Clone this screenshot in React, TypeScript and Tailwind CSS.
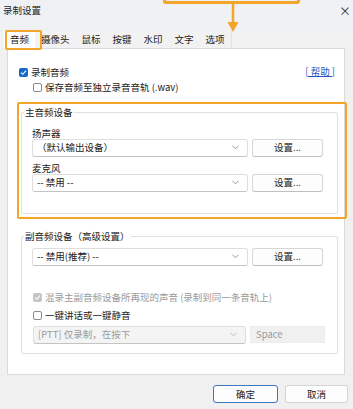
import React from "react";

const Chevron = ({ color = "#888" }: { color?: string }) => (
  <svg width="7" height="5" viewBox="0 0 7 5" className="shrink-0">
    <polyline points="0.5,0.8 3.5,3.8 6.5,0.8" fill="none" stroke={color} strokeWidth="0.9" />
  </svg>
);

const CheckBox = ({ checked, disabled }: { checked?: boolean; disabled?: boolean }) => {
  if (checked) {
    return (
      <span
        className={`w-[9px] h-[9px] rounded-[2px] flex items-center justify-center shrink-0 ${
          disabled ? "bg-[#c4c4c4]" : "bg-[#1668c9]"
        }`}
      >
        <svg width="7" height="7" viewBox="0 0 7 7">
          <polyline points="1,3.6 2.8,5.3 6,1.6" fill="none" stroke="#fff" strokeWidth="1.1" />
        </svg>
      </span>
    );
  }
  return <span className="w-[9px] h-[9px] rounded-[2px] border border-[#8a8a8a] bg-white shrink-0" />;
};

const Select = ({ text, disabled }: { text: string; disabled?: boolean }) => (
  <div
    className={`flex-1 h-[18px] flex items-center justify-between pl-[4px] pr-[8px] rounded-[3px] border border-[#dedede] border-b-[#c4c4c4] ${
      disabled ? "bg-[#f4f4f4] text-[#9a9a9a]" : "bg-white text-[#222]"
    }`}
  >
    <span>{text}</span>
    <Chevron color={disabled ? "#b8b8b8" : "#8a8a8a"} />
  </div>
);

const SetBtn = () => (
  <div className="w-[71px] h-[18px] flex items-center justify-center rounded-[3px] border border-[#d6d6d6] border-b-[#c0c0c0] bg-[#fdfdfd] text-[#222]">
    设置...
  </div>
);

export default function App() {
  return (
    <div className="relative w-[353px] h-[409px] overflow-hidden bg-[#f0f0f0] text-[9.5px] leading-[13px] text-[#222] font-['Noto_Sans_CJK_SC',sans-serif]">
      {/* title bar */}
      <div className="h-[31px] flex items-start justify-between pl-[3px] pr-[2px] bg-[#eff1f4]">
        <span className="mt-[4px]">录制设置</span>
        <span className="mt-[4px] text-[12px] text-[#333]">×</span>
      </div>

      {/* tabs */}
      <div className="flex h-[17px] pl-[4px] bg-[#f2f2f2]">
        {["音频", "摄像头", "鼠标", "按键", "水印", "文字", "选项"].map((t, i) => (
          <div
            key={t}
            className={`px-[6px] flex items-center ${i === 0 ? "bg-white" : ""} ${
              i === 6 ? "border-r border-[#e2e2e2]" : ""
            }`}
          >
            {t}
          </div>
        ))}
      </div>

      {/* panel */}
      <div className="ml-[7px] w-[338px] h-[327px] bg-white border border-[#dadada] pt-[16.5px] pl-[11px] pr-[5px]">
        <div className="flex items-center justify-between h-[13px]">
          <div className="flex items-center gap-[3px]">
            <CheckBox checked />
            <span>录制音频</span>
          </div>
          <span className="text-[#2357c4] underline mr-[4px] -mt-[2px]">[ 帮助 ]</span>
        </div>
        <div className="flex items-center gap-[3px] h-[13px] mt-[2px] ml-[14px]">
          <CheckBox />
          <span>保存音频至独立录音音轨 (.wav)</span>
        </div>

        {/* group 1 */}
        <div className="relative mt-[18.5px] ml-[2px] w-[317px] border border-[#e0e0e0] rounded-[2px] pt-[13.5px] pl-[10px] pr-[14px] pb-[21px]">
          <span className="absolute -top-[7px] left-[2px] bg-white px-[1px]">主音频设备</span>
          <div className="leading-[12px] pl-[-1px]">扬声器</div>
          <div className="flex gap-[4px]">
            <Select text="（默认输出设备）" />
            <SetBtn />
          </div>
          <div className="leading-[12px] mt-[5px]">麦克风</div>
          <div className="flex gap-[4px]">
            <Select text="-- 禁用 --" />
            <SetBtn />
          </div>
        </div>

        {/* group 2 */}
        <div className="relative mt-[22px] ml-[2px] w-[317px] border border-[#e0e0e0] rounded-[2px] pt-[11px] pl-[10px] pr-[12px] pb-[9px]">
          <span className="absolute -top-[7px] left-[2px] bg-white px-[1px]">副音频设备（高级设置）</span>
          <div className="flex gap-[4px] pr-[2px]">
            <Select text="-- 禁用(推荐) --" />
            <SetBtn />
          </div>
          <div className="flex items-center gap-[3px] h-[13px] mt-[25.5px] ml-[1px] text-[#9a9a9a]">
            <CheckBox checked disabled />
            <span>混录主副音频设备所再现的声音 (录制到同一条音轨上)</span>
          </div>
          <div className="flex items-center gap-[3px] h-[13px] mt-[5px] ml-[1px]">
            <CheckBox />
            <span>一键讲话或一键静音</span>
          </div>
          <div className="flex gap-[4px] mt-[3.5px] ml-[1px]">
            <Select text="[PTT] 仅录制，在按下" disabled />
            <div className="w-[75px] h-[17px] flex items-center pl-[5px] bg-[#f0f0f0] text-[#9a9a9a] border border-[#ececec]">
              Space
            </div>
          </div>
        </div>
      </div>

      {/* footer */}
      <div className="flex justify-end gap-[7px] mt-[10px] pr-[5px]">
        <div className="w-[65px] h-[18px] flex items-center justify-center rounded-[3px] border border-[#3a78c2] bg-[#fdfdfd]">
          确定
        </div>
        <div className="w-[63px] h-[18px] flex items-center justify-center rounded-[3px] border border-[#d4d4d4] bg-[#fdfdfd]">
          取消
        </div>
      </div>

      {/* annotations */}
      <div className="absolute left-[163px] -top-[12px] w-[137px] h-[16px] border-[3px] border-[#f3a52a] rounded-[3px]" />
      <svg className="absolute left-[226px] top-[2px]" width="14" height="31" viewBox="0 0 14 31">
        <line x1="7" y1="0" x2="7" y2="22" stroke="#f3a52a" strokeWidth="2.5" />
        <polygon points="1.5,20 12.5,20 7,30" fill="#f3a52a" />
      </svg>
      <div className="absolute left-[5px] top-[30px] w-[37px] h-[20px] border-2 border-[#f3a52a] rounded-[2px]" />
      <div className="absolute left-[17px] top-[102px] w-[330px] h-[117px] border-[2.5px] border-[#f3a52a] rounded-[2px]" />
    </div>
  );
}
